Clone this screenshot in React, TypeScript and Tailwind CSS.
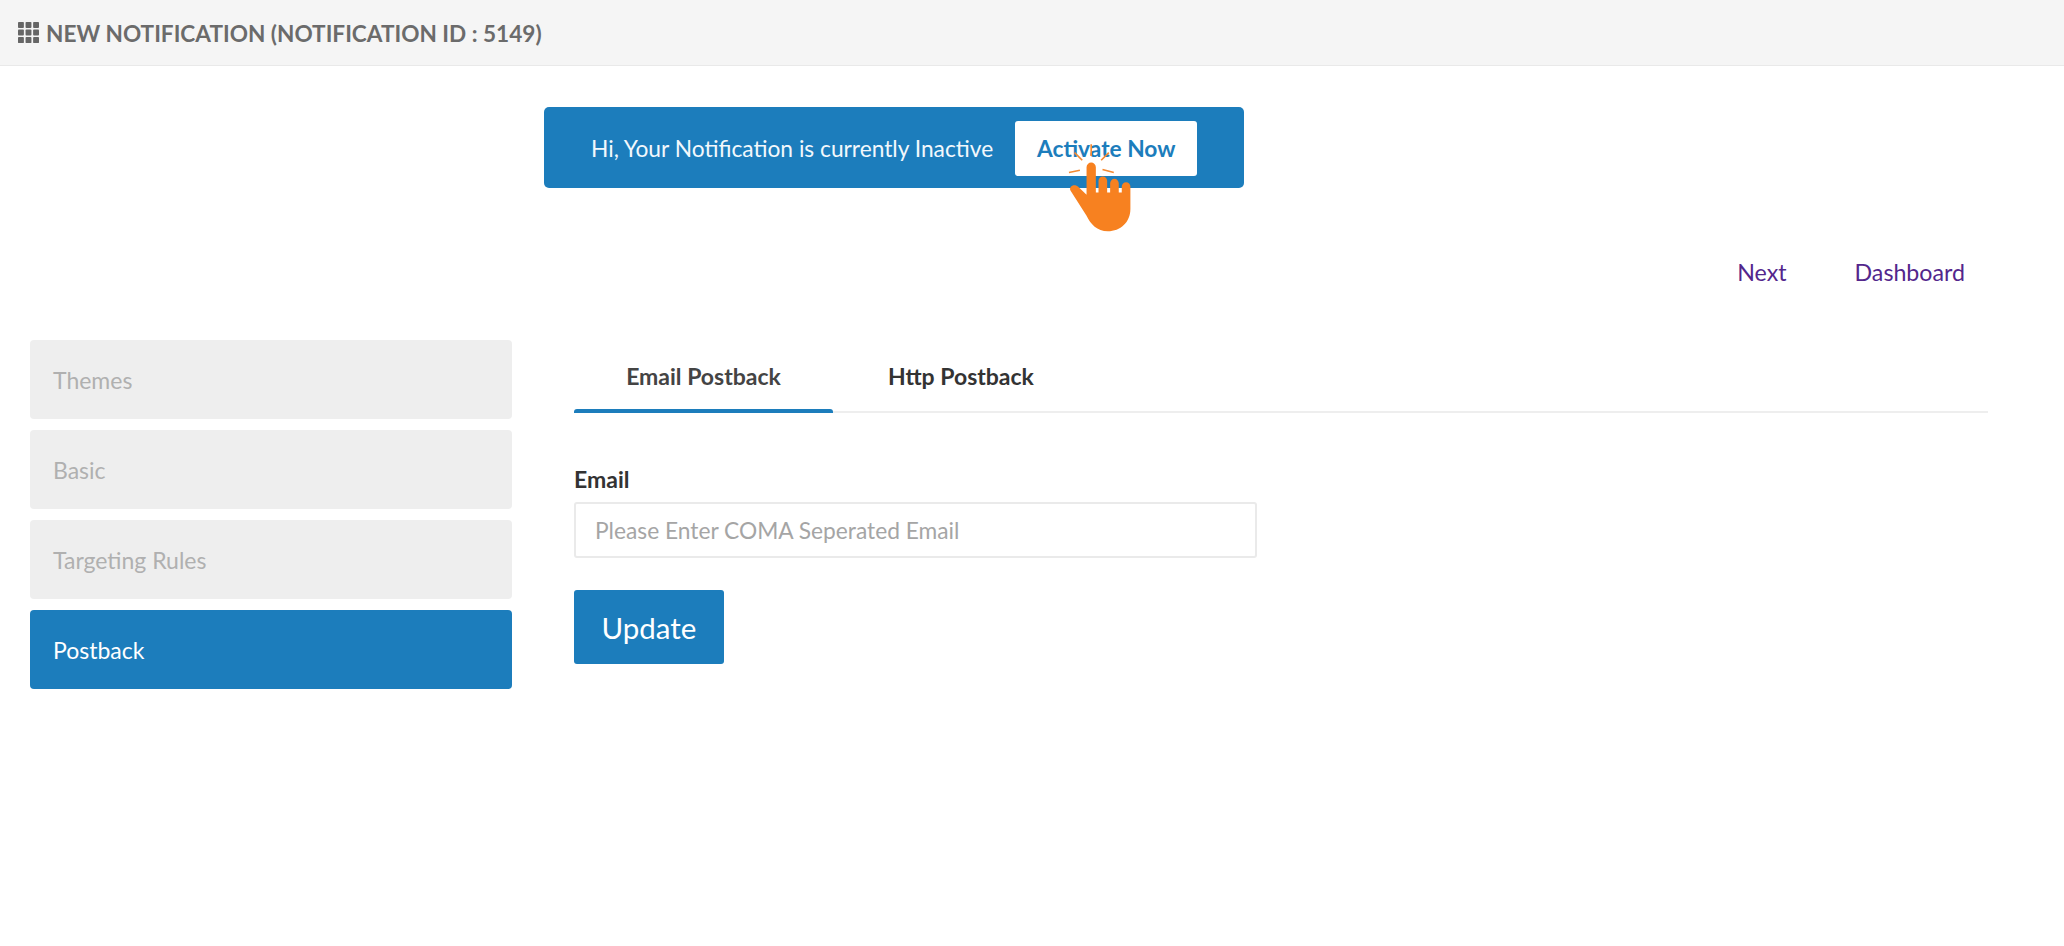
import React from 'react';

const steps = ['Themes', 'Basic', 'Targeting Rules'];

const GridIcon: React.FC = () => (
  <svg width="21" height="21" viewBox="0 0 20 20" className="mr-[7px] shrink-0 fill-[#666666]">
    <rect x="0" y="0" width="5.6" height="5.6" rx="0.8" />
    <rect x="7.2" y="0" width="5.6" height="5.6" rx="0.8" />
    <rect x="14.4" y="0" width="5.6" height="5.6" rx="0.8" />
    <rect x="0" y="7.2" width="5.6" height="5.6" rx="0.8" />
    <rect x="7.2" y="7.2" width="5.6" height="5.6" rx="0.8" />
    <rect x="14.4" y="7.2" width="5.6" height="5.6" rx="0.8" />
    <rect x="0" y="14.4" width="5.6" height="5.6" rx="0.8" />
    <rect x="7.2" y="14.4" width="5.6" height="5.6" rx="0.8" />
    <rect x="14.4" y="14.4" width="5.6" height="5.6" rx="0.8" />
  </svg>
);

const HandIcon: React.FC = () => (
  <svg viewBox="200 60 200 280" className="absolute left-[52px] top-[20px] h-[93px] w-[67px]">
    <g stroke="#f58a32" strokeWidth="5" fill="none">
      <path d="M272 70V105M222 95L245 118M325 95L302 118M205 155L238 148M340 155L306 146" />
    </g>
    <path
      fill="#f78120"
      d="M258 139a14 14 0 0 1 28 0V215H294V180a13 13 0 0 1 26 0V215H329V187a13 13 0 0 1 26 0V215H364V197a13 13 0 0 1 26 0V265C390 305 360 332 322 332C290 332 270 310 258 285L210 210C203 197 220 187 232 197L258 222Z"
    />
  </svg>
);

const App: React.FC = () => {
  return (
    <div className="h-[946px] w-full overflow-hidden bg-white font-['Lato','Open_Sans',sans-serif] text-[23px]">
      <div className="flex h-[66px] items-center border-b border-[#e9e9e9] bg-[#f5f5f5] pl-[18px]">
        <GridIcon />
        <span className="pt-[2px] text-[22.6px] font-bold text-[#6b6b6b]">NEW NOTIFICATION (NOTIFICATION ID : 5149)</span>
      </div>

      <div className="ml-[544px] mt-[41px] flex h-[81px] w-[700px] items-center rounded-[5px] bg-[#1c7dbc] pl-[47px] pt-[2px]">
        <span className="pt-[2px] text-[22.75px] text-[#f2f8fc]">Hi, Your Notification is currently Inactive</span>
        <div className="relative ml-[22px]">
          <button className="h-[55px] w-[182px] rounded-[3px] bg-white pt-[2px] text-[22.75px] font-bold text-[#1c7dbc]">Activate Now</button>
          <HandIcon />
        </div>
      </div>

      <div className="mt-[67px] flex justify-end gap-[68px] pr-[99px] text-[23.2px] text-[#53268c]">
        <a>Next</a>
        <a>Dashboard</a>
      </div>

      <div className="mt-[50px] flex">
        <div className="ml-[30px] flex w-[482px] shrink-0 flex-col gap-[11px]">
          {steps.map((step) => (
            <div key={step} className="flex h-[79px] items-center rounded-[4px] bg-[#eeeeee] pl-[23px] pt-[2px] text-[#b0b0b0]">
              {step}
            </div>
          ))}
          <div className="flex h-[79px] items-center rounded-[4px] bg-[#1c7dbc] pl-[23px] pt-[2px] text-white">Postback</div>
        </div>

        <div className="ml-[62px] w-[1414px]">
          <div className="flex h-[73px] border-b-2 border-[#eeeeee]">
            <div className="relative flex w-[259px] items-center justify-center pt-[2px] font-bold text-[#444444]">
              Email Postback
              <div className="absolute -bottom-[2px] left-0 h-[4px] w-full rounded-t-[3px] bg-[#1c7dbc]" />
            </div>
            <div className="ml-[55px] flex items-center pt-[2px] font-bold text-[#333333]">Http Postback</div>
          </div>

          <label className="mt-[54px] block font-bold leading-[24px] text-[#333333]">Email</label>
          <input
            placeholder="Please Enter COMA Seperated Email"
            className="mt-[11px] block h-[56px] w-[683px] rounded-[3px] border-2 border-[#eaeaea] bg-white px-[19px] pt-[2px] text-[22.75px] placeholder:text-[#a5a5a5]"
          />
          <button className="mt-[32px] h-[74px] w-[150px] rounded-[3px] bg-[#1c7dbc] pt-[2px] text-[29.5px] text-white">Update</button>
        </div>
      </div>
    </div>
  );
};

export default App;
